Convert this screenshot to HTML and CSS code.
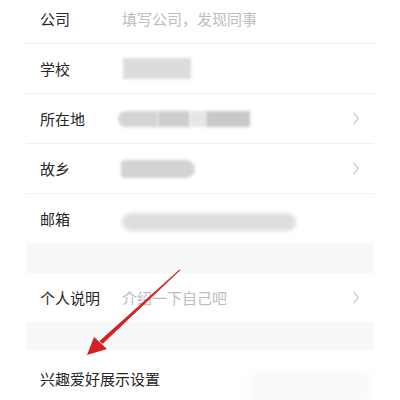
FILE: index.html
```html
<!DOCTYPE html>
<html lang="zh">
<head>
<meta charset="utf-8">
<link rel="stylesheet" href="styles.css">
</head>
<body>
<div class="page">
  <div class="list">
    <div class="row first">
      <span class="label">公司</span>
      <span class="value placeholder">填写公司，发现同事</span>
    </div>
    <div class="row">
      <span class="label">学校</span>
      <span class="value"><i class="blur school"></i></span>
    </div>
    <div class="row">
      <span class="label">所在地</span>
      <span class="value loc">
        <i class="blur l1"></i><i class="blur l2"></i><i class="blur l3"></i><i class="blur l4"></i>
      </span>
      <svg class="chev" width="8" height="13" viewBox="0 0 8 13"><polyline points="1.5,1 6.5,6.5 1.5,12" fill="none" stroke="#c9c9c9" stroke-width="1.2"/></svg>
    </div>
    <div class="row">
      <span class="label">故乡</span>
      <span class="value"><i class="blur home"></i></span>
      <svg class="chev" width="8" height="13" viewBox="0 0 8 13"><polyline points="1.5,1 6.5,6.5 1.5,12" fill="none" stroke="#c9c9c9" stroke-width="1.2"/></svg>
    </div>
    <div class="row last">
      <span class="label">邮箱</span>
      <span class="value"><i class="blur mail"></i></span>
    </div>
    <div class="gap g1"></div>
    <div class="row last">
      <span class="label">个人说明</span>
      <span class="value placeholder">介绍一下自己吧</span>
      <svg class="chev" width="8" height="13" viewBox="0 0 8 13"><polyline points="1.5,1 6.5,6.5 1.5,12" fill="none" stroke="#c9c9c9" stroke-width="1.2"/></svg>
    </div>
    <div class="gap g2"></div>
    <div class="row last tall">
      <span class="label">兴趣爱好展示设置</span>
      <span class="value"><i class="blur faint"></i></span>
    </div>
  </div>
  <svg class="arrow" width="400" height="400" viewBox="0 0 400 400">
    <polygon points="179.5,269.5 180.2,270.3 102.5,344 99.5,341" fill="#d42222"/>
    <polygon points="87,355 94,337 107,349" fill="#d42222"/>
  </svg>
</div>
</body>
</html>
```
FILE: styles.css
```css
html, body {
  margin: 0;
  padding: 0;
  background: #ffffff;
}
body {
  width: 400px;
  height: 400px;
  overflow: hidden;
  font-family: "Noto Sans CJK SC", "Noto Sans", sans-serif;
}
.page {
  position: relative;
  width: 400px;
  height: 400px;
  overflow: hidden;
}
.list {
  margin: -6px 0 0 26px;
  width: 348px;
  display: flex;
  flex-direction: column;
}
.row {
  height: 49px;
  border-bottom: 1px solid #efefef;
  display: flex;
  align-items: center;
  padding: 0 14px;
}
.row.last {
  border-bottom: none;
}
.row.tall {
  height: 56px;
}
.label {
  width: 82px;
  flex: none;
  font-size: 15px;
  color: #262626;
  white-space: nowrap;
}
.row.tall .label {
  width: auto;
}
.value {
  flex: 1;
  display: flex;
  align-items: center;
  font-size: 15px;
}
.placeholder {
  color: #bdbdbd;
}
.chev {
  flex: none;
}
.blur {
  display: block;
  background: #d6d6d6;
  filter: blur(1.5px);
}
.school {
  width: 68px;
  height: 21px;
  margin-left: 1px;
  background: #dcdcdc;
}
.loc {
  margin-left: -4px;
}
.l1 {
  width: 40px;
  height: 16px;
  background: #d4d4d4;
  border-radius: 8px 0 0 8px;
}
.l2 {
  width: 32px;
  height: 16px;
  background: #cdcdcd;
}
.l3 {
  width: 16px;
  height: 16px;
  background: #e6e6e6;
}
.l4 {
  width: 44px;
  height: 16px;
  background: #c8c8c8;
}
.home {
  width: 74px;
  height: 18px;
  margin-left: -1px;
  background: #d3d3d3;
  border-radius: 4px 10px 10px 4px;
}
.mail {
  width: 174px;
  height: 18px;
  margin-top: 6px;
  background: #dedede;
  border-radius: 9px;
  filter: blur(2px);
}
.faint {
  width: 120px;
  height: 30px;
  margin-left: 90px;
  margin-top: 18px;
  background: #f9f9f9;
  filter: blur(5px);
}
.gap {
  background: #f7f8fa;
}
.g1 {
  height: 30px;
}
.g2 {
  height: 28px;
}
.arrow {
  position: absolute;
  left: 0;
  top: 0;
}
```
